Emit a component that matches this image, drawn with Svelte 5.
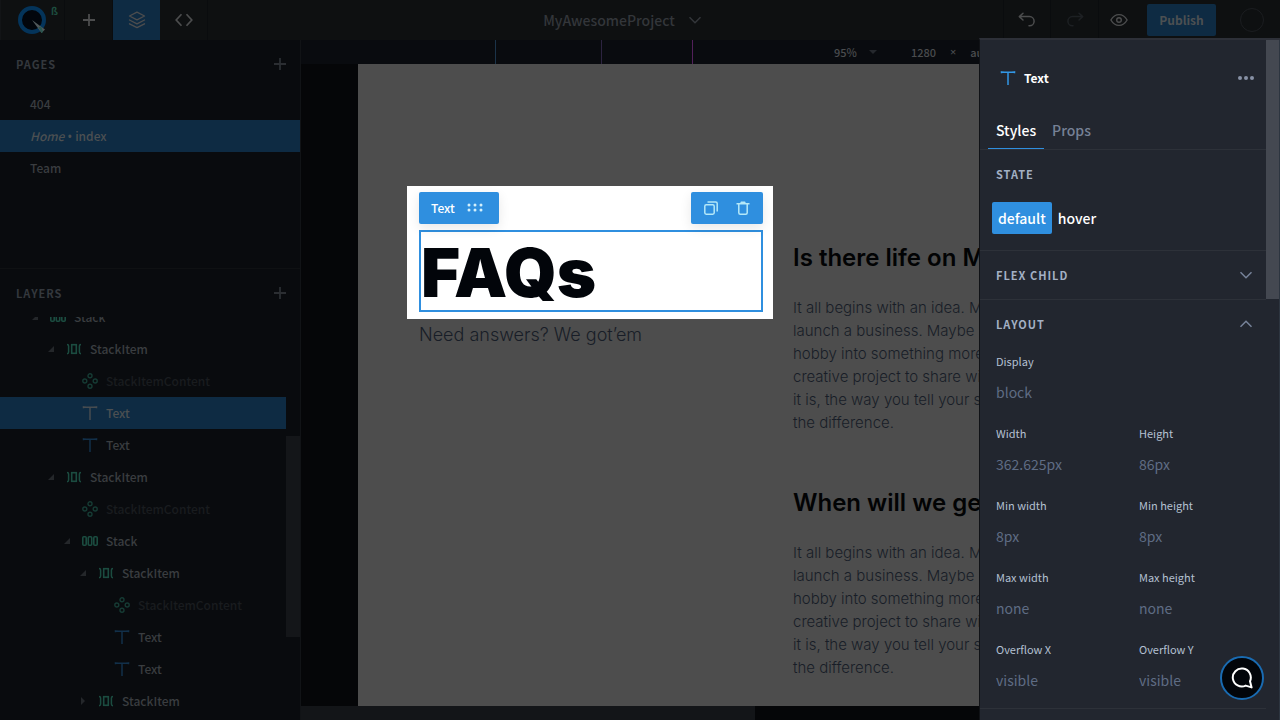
<script>
  const pages = [
    { name: '404' },
    { name: 'index', prefix: 'Home', active: true },
    { name: 'Team' }
  ];

  const layers = [
    { name: 'Stack', icon: 'stack', depth: 0, caret: 'open' },
    { name: 'StackItem', icon: 'item', depth: 1, caret: 'open' },
    { name: 'StackItemContent', icon: 'slot', depth: 2, muted: true },
    { name: 'Text', icon: 'text', depth: 2, active: true },
    { name: 'Text', icon: 'text', depth: 2 },
    { name: 'StackItem', icon: 'item', depth: 1, caret: 'open' },
    { name: 'StackItemContent', icon: 'slot', depth: 2, muted: true },
    { name: 'Stack', icon: 'stack', depth: 2, caret: 'open' },
    { name: 'StackItem', icon: 'item', depth: 3, caret: 'open' },
    { name: 'StackItemContent', icon: 'slot', depth: 4, muted: true },
    { name: 'Text', icon: 'text', depth: 4 },
    { name: 'Text', icon: 'text', depth: 4 },
    { name: 'StackItem', icon: 'item', depth: 3, caret: 'closed' }
  ];

  const answer = [
    'It all begins with an idea. Maybe',
    'launch a business. Maybe you',
    'hobby into something more.',
    'creative project to share with',
    'it is, the way you tell your story',
    'the difference.'
  ];
  const questions = ['Is there life on Mars?', 'When will we get there?'];

  const fields = [
    { id: 'display', label: 'Display', value: 'block', wide: true },
    { id: 'width', label: 'Width', value: '362.625px' },
    { id: 'height', label: 'Height', value: '86px' },
    { id: 'min-width', label: 'Min width', value: '8px' },
    { id: 'min-height', label: 'Min height', value: '8px' },
    { id: 'max-width', label: 'Max width', value: 'none' },
    { id: 'max-height', label: 'Max height', value: 'none' },
    { id: 'overflow-x', label: 'Overflow X', value: 'visible' },
    { id: 'overflow-y', label: 'Overflow Y', value: 'visible' }
  ];
</script>

{#snippet layerIcon(kind)}
  <svg class="glyph {kind}" width="16" height="16" viewBox="0 0 16 16" fill="none" stroke="currentColor" aria-hidden="true">
    {#if kind === 'text'}
      <path d="M1.5 3.2V1.9Q8 2.7 14.5 1.9V3.2M8 2.4V15" stroke-width="1.5" />
    {:else if kind === 'stack'}
      <rect x=".8" y="3.8" width="3.4" height="8.4" rx="1" stroke-width="1.6" />
      <rect x="6.3" y="3.8" width="3.4" height="8.4" rx="1" stroke-width="1.6" />
      <rect x="11.8" y="3.8" width="3.4" height="8.4" rx="1" stroke-width="1.6" />
    {:else if kind === 'item'}
      <rect x="5.7" y="3.7" width="4.6" height="8.6" stroke-width="1.6" />
      <path d="M1 3.4Q2.6 3.4 2.6 5V11Q2.6 12.7 1 12.7M15 3.4Q13.4 3.4 13.4 5V11Q13.4 12.7 15 12.7" stroke-width="1.5" />
    {:else}
      <g stroke-width="1.4">
        <circle cx="8" cy="2.8" r="2" /><circle cx="8" cy="13.2" r="2" />
        <circle cx="2.8" cy="8" r="2" /><circle cx="13.2" cy="8" r="2" />
      </g>
    {/if}
  </svg>
{/snippet}

{#snippet plus()}
  <svg width="12" height="12" viewBox="0 0 12 12" fill="none" stroke="currentColor" stroke-width="1.8" aria-hidden="true">
    <path d="M6 0V12M0 6H12" />
  </svg>
{/snippet}

{#snippet chevron(up)}
  <svg width="14" height="14" viewBox="0 0 14 14" fill="none" stroke="currentColor" stroke-width="1.5" aria-hidden="true">
    <path d={up ? 'M1.5 9.7L7 4.2L12.5 9.7' : 'M1.5 4.3L7 9.8L12.5 4.3'} />
  </svg>
{/snippet}

<div class="app">
  <header class="topbar">
    <a class="logo" href="#home" aria-label="Home">
      <svg width="28" height="28" viewBox="0 0 28 28" aria-hidden="true">
        <circle cx="14" cy="14" r="12" fill="#02060c" stroke="#04345a" stroke-width="4" />
        <path d="M14 14L27 23.5L23.5 27Z" fill="#50595b" />
        <path d="M20.5 21L23.4 20.9L25 26L23.5 27Z" fill="#28564f" />
      </svg>
      <sup>ß</sup>
    </a>
    <button class="tool" aria-label="Add">{@render plus()}</button>
    <button class="tool active" aria-label="Layers">
      <svg width="18" height="18" viewBox="0 0 18 18" fill="none" stroke="currentColor" stroke-width="1.4" stroke-linejoin="round" stroke-linecap="round" aria-hidden="true">
        <path d="M9 1.2L16.5 5L9 8.8L1.5 5ZM1.5 9L9 12.8L16.5 9M1.5 12.8L9 16.6L16.5 12.8" />
      </svg>
    </button>
    <button class="tool" aria-label="Code">
      <svg width="18" height="14" viewBox="0 0 18 14" fill="none" stroke="currentColor" stroke-width="1.7" aria-hidden="true">
        <path d="M6.5 1.2L1.2 7L6.5 12.8M11.5 1.2L16.8 7L11.5 12.8" />
      </svg>
    </button>
    <button class="project">MyAwesomeProject {@render chevron(false)}</button>
    <button class="tool edge" aria-label="Undo">
      <svg width="18" height="16" viewBox="0 0 18 16" fill="none" stroke="currentColor" stroke-width="1.5" stroke-linecap="round" stroke-linejoin="round" aria-hidden="true">
        <path d="M5 1.2L1.3 4.6L5 8M1.6 4.6H11.5A4.6 4.6 0 0 1 11.5 13.8H11" />
      </svg>
    </button>
    <button class="tool dim" aria-label="Redo">
      <svg width="18" height="16" viewBox="0 0 18 16" fill="none" stroke="currentColor" stroke-width="1.5" stroke-linecap="round" stroke-linejoin="round" aria-hidden="true">
        <path d="M13 1.2L16.7 4.6L13 8M16.4 4.6H6.5A4.6 4.6 0 0 0 6.5 13.8H7" />
      </svg>
    </button>
    <button class="tool preview" aria-label="Preview">
      <svg width="18" height="14" viewBox="0 0 18 14" fill="none" stroke="currentColor" stroke-width="1.4" aria-hidden="true">
        <path d="M.9 7Q4 1.6 9 1.6T17.1 7Q14 12.4 9 12.4T.9 7Z" /><circle cx="9" cy="7" r="2.3" />
      </svg>
    </button>
    <button class="publish">Publish</button>
    <button class="avatar" aria-label="Account"></button>
  </header>

  <div class="body">
    <aside class="sidebar">
      <section class="pages">
        <div class="head"><h2>Pages</h2><button aria-label="Add page">{@render plus()}</button></div>
        <nav>
          {#each pages as page}
            <a class:active={page.active} href="#{page.name}">
              {#if page.prefix}<em>{page.prefix}</em><b>{' • '}</b>{/if}{page.name}
            </a>
          {/each}
        </nav>
      </section>
      <section class="layers">
        <div class="head"><h2>Layers</h2><button aria-label="Add layer">{@render plus()}</button></div>
        <div class="treewrap">
          <ul class="tree">
            {#each layers as layer}
              <li class:active={layer.active} class:muted={layer.muted} style="padding-left: {32 + layer.depth * 16}px">
                <svg class="caret" width="6" height="6" viewBox="0 0 6 6" fill="currentColor" aria-hidden="true">
                  {#if layer.caret === 'open'}<path d="M6 0V6H0Z" />{:else if layer.caret}<path d="M1 -1L5 3L1 7Z" />{/if}
                </svg>
                {@render layerIcon(layer.icon)}
                <span>{layer.name}</span>
              </li>
            {/each}
          </ul>
          <div class="track"><div class="thumb"></div></div>
        </div>
      </section>
    </aside>

    <main class="canvas">
      <div class="ruler">
        <i class="mark sm"></i><i class="mark md"></i><i class="mark lg"></i>
        <button class="zoom">95% <svg width="8" height="4" viewBox="0 0 8 4" aria-hidden="true"><path d="M0 0H8L4 4Z" fill="#25282d" /></svg></button>
        <span>1280</span><span class="times">×</span><span>auto</span>
      </div>
      <div class="stage">
        <article class="page">
          <div class="intro">
            <div class="spotlight">
              <div class="tags">
                <button class="tag">
                  Text
                  <svg width="16" height="10" viewBox="0 0 16 10" fill="#d3f0fb" aria-hidden="true">
                    <circle cx="2" cy="2" r="1.5" /><circle cx="8" cy="2" r="1.5" /><circle cx="14" cy="2" r="1.5" />
                    <circle cx="2" cy="7" r="1.5" /><circle cx="8" cy="7" r="1.5" /><circle cx="14" cy="7" r="1.5" />
                  </svg>
                </button>
                <div class="tag actions">
                  <button aria-label="Duplicate">
                    <svg width="16" height="16" viewBox="0 0 16 16" fill="none" stroke="currentColor" stroke-width="1.5" aria-hidden="true">
                      <rect x="1.8" y="4.8" width="9.4" height="9.4" rx="1.4" /><path d="M4.5 1.9H12.7Q14.2 1.9 14.2 3.4V11.5" />
                    </svg>
                  </button>
                  <button aria-label="Delete">
                    <svg width="16" height="16" viewBox="0 0 16 16" fill="none" stroke="currentColor" stroke-width="1.5" aria-hidden="true">
                      <path d="M1.5 3.7H14.5M5.7 3.5L6.4 2.2H9.6L10.3 3.5M3.8 4V12.7Q3.8 14.2 5.3 14.2H10.7Q12.2 14.2 12.2 12.7V4" />
                    </svg>
                  </button>
                </div>
              </div>
              <h1>FAQs</h1>
            </div>
            <p>Need answers? We got’em</p>
          </div>
          <div class="answers">
            {#each questions as question}
              <section>
                <h3>{question}</h3>
                <p>{#each answer as line}<span>{line}</span>{/each}</p>
              </section>
            {/each}
          </div>
        </article>
      </div>
      <div class="hscroll"><div class="hthumb"></div></div>
    </main>

    <aside class="inspector">
      <div class="content">
        <div class="element">
          {@render layerIcon('text')}
          <h2>Text</h2>
          <button aria-label="More">
            <svg width="16" height="4" viewBox="0 0 16 4" fill="currentColor" aria-hidden="true">
              <circle cx="2" cy="2" r="2" /><circle cx="8" cy="2" r="2" /><circle cx="14" cy="2" r="2" />
            </svg>
          </button>
        </div>
        <div class="tabs" role="tablist">
          <button role="tab" aria-selected="true">Styles</button>
          <button role="tab" aria-selected="false">Props</button>
        </div>
        <section class="state">
          <h3>State</h3>
          <div class="options"><button class="on">default</button><button>hover</button></div>
        </section>
        <button class="group">Flex child {@render chevron(false)}</button>
        <section>
          <button class="group open">Layout {@render chevron(true)}</button>
          <div class="fields">
            {#each fields as field}
              <div class="field" class:wide={field.wide}>
                <label for={field.id}>{field.label}</label>
                <input id={field.id} value={field.value} />
              </div>
            {/each}
          </div>
        </section>
      </div>
      <div class="rail"><div class="railthumb"></div></div>
    </aside>
  </div>

  <button class="chat" aria-label="Chat">
    <svg width="22" height="22" viewBox="0 0 22 22" fill="none" stroke="#fff" stroke-width="2" stroke-linejoin="round" aria-hidden="true">
      <path d="M19 14.2A9 9 0 1 0 14.7 18.6L20.6 20.4Z" />
    </svg>
  </button>
</div>

<style>
  :global(body) {
    background: #050608;
  }

  .app,
  .app * {
    box-sizing: border-box;
  }

  .app {
    --ui: 'Noto Sans CJK SC', 'Noto Sans', sans-serif;
    position: relative;
    display: flex;
    flex-direction: column;
    height: 100vh;
    overflow: hidden;
    color: #44474a;
    font: 500 12px/20px var(--ui);
  }

  button {
    display: flex;
    align-items: center;
    justify-content: center;
    margin: 0;
    padding: 0;
    border: 0;
    background: none;
    color: inherit;
    font: inherit;
  }

  h1, h2, h3, p, ul {
    margin: 0;
    padding: 0;
  }

  svg {
    display: block;
    flex: none;
  }

  a {
    color: inherit;
    text-decoration: none;
  }

  .topbar {
    display: flex;
    flex: none;
    height: 40px;
    background: #0e1011;
    border-left: 1px solid #121416;
  }

  .logo {
    display: flex;
    align-items: center;
    width: 64px;
    padding-left: 17px;
    border-right: 1px solid #0a0c0e;
  }

  .logo sup {
    align-self: flex-start;
    margin: 2px 0 0 5px;
    color: #1d4d3f;
    font-size: 10px;
    font-weight: 700;
    line-height: 18px;
  }

  .tool {
    width: 48px;
    border-right: 1px solid #0a0c0e;
    color: #4c4d4e;
  }

  .tool.active {
    width: 47px;
    background: #0e2b43;
    border: 0;
  }

  .tool.edge {
    border-left: 1px solid #0a0c0e;
  }

  .tool.dim {
    color: #1d2023;
  }

  .tool.preview {
    width: 40px;
    border: 0;
  }

  .project {
    flex: 1;
    gap: 13px;
    padding-left: 34px;
    color: #33363a;
    font-size: 14px;
  }

  .publish {
    align-self: center;
    width: 69px;
    height: 32px;
    margin: 0 24px 0 8px;
    border-radius: 2px;
    background: #0e2b43;
    color: #4c5052;
    font-weight: 700;
  }

  .avatar {
    align-self: center;
    width: 24px;
    height: 24px;
    margin-right: 16px;
    border: 1px solid #1b1d20;
    border-radius: 50%;
  }

  .body {
    display: grid;
    flex: 1;
    grid-template-columns: 301px minmax(0, 1fr) 301px;
    min-height: 0;
  }

  .sidebar {
    display: flex;
    flex-direction: column;
    min-height: 0;
    background: #090b0e;
    border-right: 1px solid #111316;
  }

  .head {
    display: flex;
    align-items: center;
    justify-content: space-between;
    height: 48px;
    padding: 0 14px 0 16px;
    color: #2b2e32;
  }

  .head h2,
  .state h3,
  .group {
    font-size: 11px;
    font-weight: 700;
    letter-spacing: 1px;
    text-transform: uppercase;
  }

  .head h2 {
    color: #34383d;
  }

  .pages {
    flex: none;
    height: 229px;
    border-bottom: 1px solid #0f1113;
  }

  .pages a {
    display: block;
    height: 32px;
    padding: 6px 30px;
    color: #3a3d40;
  }

  .pages b {
    font-family: 'Noto Sans', sans-serif;
    font-weight: 500;
    white-space: pre;
  }

  .pages a.active {
    background: #0e2b43;
    color: #4c5052;
  }

  .layers {
    display: flex;
    flex: 1;
    flex-direction: column;
    min-height: 0;
  }

  .treewrap {
    display: flex;
    flex: 1;
    min-height: 0;
    overflow: hidden;
  }

  .tree {
    flex: 1;
    margin-top: -16px;
    list-style: none;
  }

  .tree li {
    display: flex;
    align-items: center;
    height: 32px;
    color: #3a3d40;
  }

  .tree li.active {
    background: #0e2b43;
    color: #4c5052;
  }

  .tree li.muted {
    color: #191c1f;
  }

  .caret {
    margin-right: 12px;
    overflow: visible;
    color: #24272a;
  }

  .tree .glyph {
    margin-right: 8px;
    color: #1b4c40;
  }

  .tree .glyph.text {
    color: #12304a;
  }

  .tree .glyph.slot {
    color: #163b34;
  }

  .tree .active .glyph.text {
    color: #474c50;
  }

  .track {
    width: 14px;
    padding-top: 119px;
  }

  .thumb {
    height: 201px;
    background: #141619;
  }

  .canvas {
    display: flex;
    flex-direction: column;
    min-width: 0;
    min-height: 0;
    overflow: hidden;
    background: #050608;
  }

  .ruler {
    display: flex;
    flex: none;
    align-items: center;
    height: 24px;
    background: #090b0f;
    color: #4a4c4e;
    font-size: 11px;
    line-height: 24px;
  }

  .mark {
    flex: none;
    align-self: stretch;
    border-right: 1px solid #1b3349;
  }

  .mark.sm { width: 195px; }
  .mark.md { width: 106px; border-color: #2c2340; }
  .mark.lg { width: 91px; border-color: #52205a; }

  .zoom {
    gap: 12px;
    margin: 0 34px 0 141px;
  }

  .times {
    margin: 0 14px;
    font-family: 'Noto Sans', sans-serif;
  }

  .stage {
    display: flex;
    flex: 1;
    min-height: 0;
    padding-left: 57px;
  }

  .page {
    display: flex;
    flex: 1;
    gap: 20px;
    min-width: 0;
    padding: 122px 0 0 49px;
    overflow: hidden;
    background: #4d4d4d;
    color: #181d27;
    font-family: Inter, sans-serif;
    font-weight: 300;
  }

  .intro {
    flex: none;
    width: 366px;
  }

  .intro p {
    padding: 2px 12px;
    font-size: 18px;
    line-height: 28px;
  }

  .spotlight {
    padding: 6px 10px 7px 12px;
    background: #fff;
  }

  .tags {
    display: flex;
    justify-content: space-between;
    margin-bottom: 6px;
  }

  .tag {
    gap: 12px;
    height: 32px;
    padding: 0 16px 0 12px;
    border-radius: 2px;
    background: #2f8fdf;
    box-shadow: 0 4px 12px #00000018;
    color: #fff;
    font: 500 12px/20px var(--ui);
  }

  .actions {
    display: flex;
    align-items: center;
    gap: 16px;
    padding: 0 12px;
    color: #b4e8f8;
  }

  h1 {
    height: 82px;
    border: 2px solid #2f8fdf;
    color: #02050a;
    font-size: 67px;
    font-weight: 900;
    line-height: 82px;
  }

  .answers {
    display: flex;
    flex-direction: column;
    gap: 51px;
    min-width: 0;
    padding-top: 54px;
    white-space: nowrap;
  }

  .answers h3 {
    margin-bottom: 20px;
    color: #020304;
    font-size: 24px;
    font-weight: 600;
    line-height: 36px;
  }

  .answers p {
    font-size: 15px;
    line-height: 23px;
  }

  .answers span {
    display: block;
  }

  .hscroll {
    flex: none;
    height: 14px;
  }

  .hthumb {
    width: 67%;
    height: 100%;
    background: #131518;
  }

  .inspector {
    z-index: 1;
    display: flex;
    min-height: 0;
    margin-top: -2px;
    overflow: hidden;
    background: #22262f;
    border-top: 2px solid #2d3038;
    border-left: 1px solid #101216;
    color: #fff;
  }

  .content {
    flex: 1;
    min-width: 0;
  }

  .element {
    display: flex;
    align-items: center;
    gap: 8px;
    height: 76px;
    padding: 0 12px 0 20px;
  }

  .element .glyph {
    color: #3297e6;
  }

  .element h2 {
    flex: 1;
    font-size: 12px;
    font-weight: 700;
  }

  .element button {
    color: #8791a5;
  }

  .tabs {
    display: flex;
    height: 34px;
    padding-left: 8px;
    border-bottom: 1px solid #2d3139;
    font-size: 14px;
  }

  .tabs button {
    padding: 0 8px 4px;
    border-bottom: 1px solid transparent;
    color: #768196;
  }

  .tabs button[aria-selected='true'] {
    border-color: #2f8fdf;
    color: #fff;
  }

  .state {
    height: 101px;
    border-bottom: 1px solid #2d3139;
  }

  .state h3 {
    padding-left: 16px;
    color: #a3b0c4;
    line-height: 48px;
  }

  .options {
    display: flex;
    padding: 4px 12px;
    font-size: 14px;
  }

  .options button {
    height: 32px;
    padding: 0 6px;
    border-radius: 2px;
  }

  .options .on {
    background: #2f8fdf;
  }

  .group {
    justify-content: space-between;
    width: 100%;
    height: 49px;
    padding: 0 13px 0 16px;
    border-bottom: 1px solid #2d3139;
    color: #a3b0c4;
  }

  .group svg {
    color: #77839a;
  }

  .group.open {
    height: 48px;
    border: 0;
  }

  .fields {
    display: grid;
    grid-template-columns: 1fr 1fr;
    border-bottom: 1px solid #2d3139;
  }

  .field {
    display: flex;
    flex-direction: column;
    min-width: 0;
    padding: 0 0 10px 16px;
  }

  .field.wide {
    grid-column: 1 / -1;
  }

  .field label {
    color: #b4c0d2;
    font-size: 11px;
    font-weight: 400;
    line-height: 26px;
  }

  .field input {
    width: 100%;
    height: 36px;
    padding: 0;
    border: 0;
    outline: 0;
    background: none;
    color: #5f6c84;
    font: 400 14px/36px var(--ui);
  }

  .rail {
    flex: none;
    width: 14px;
    border-right: 1px solid #2d3540;
  }

  .railthumb {
    height: 259px;
    background: #444851;
  }

  .chat {
    position: absolute;
    z-index: 2;
    right: 16px;
    bottom: 20px;
    width: 44px;
    height: 44px;
    border: 2px solid #196bb2;
    border-radius: 50%;
    background: #02050a;
  }
</style>
